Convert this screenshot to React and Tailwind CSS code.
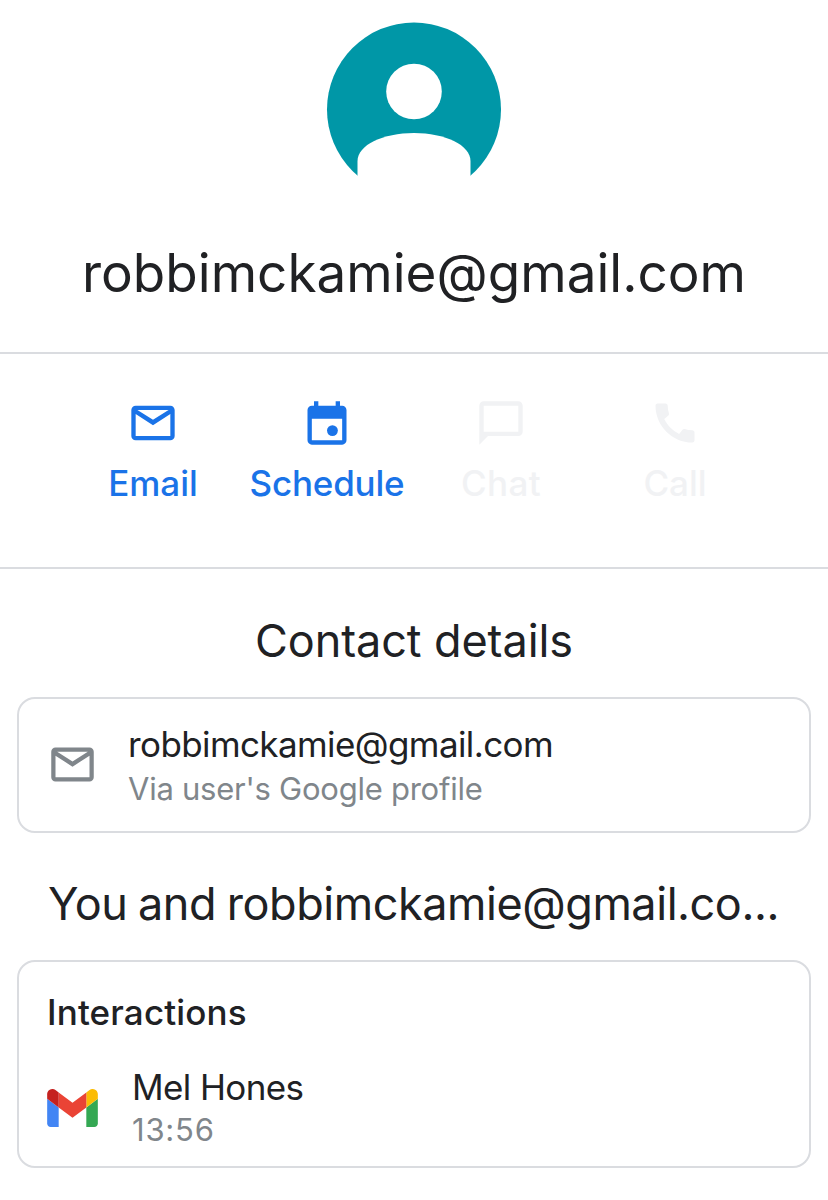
import clsx from 'clsx'

const actions = [
  { label: 'Email', icon: MailIcon, enabled: true, tracking: 'tracking-[0px]' },
  { label: 'Schedule', icon: CalendarIcon, enabled: true, tracking: 'tracking-[-0.2px]' },
  { label: 'Chat', icon: ChatIcon, enabled: false, tracking: 'tracking-[0.4px]' },
  { label: 'Call', icon: PhoneIcon, enabled: false, tracking: 'tracking-[0px]' },
]

function MailIcon({ className }) {
  return (
    <svg viewBox="0 0 24 24" fill="currentColor" className={className}>
      <path d="M22 6c0-1.100-.9-2-2-2H4c-1.100 0-2 .9-2 2v12c0 1.100.9 2 2 2h16c1.100 0 2-.9 2-2V6zM19.200 6L12 10.550 4.800 6h14.400zM20 18H4V7.900l8 5.100 8-5.100V18z" />
    </svg>
  )
}

function CalendarIcon({ className }) {
  return (
    <svg viewBox="0 0 24 24" fill="currentColor" className={className}>
      <path fillRule="evenodd" d="M19 4h-1V2h-2v2H8V2H6v2H5c-1.110 0-2 .9-2 2v14c0 1.100.89 2 2 2h14c1.100 0 2-.9 2-2V6c0-1.100-.9-2-2-2zm0 16H5V10h14v10z" />
      <circle cx="14.500" cy="15.500" r="2.500" />
    </svg>
  )
}

function ChatIcon({ className }) {
  return (
    <svg viewBox="0 0 24 24" fill="currentColor" className={className}>
      <path d="M20 2H4c-1.100 0-2 .9-2 2v18l4-4h14c1.100 0 2-.9 2-2V4c0-1.100-.9-2-2-2zm0 14H4V4h16v12z" />
    </svg>
  )
}

function PhoneIcon({ className }) {
  return (
    <svg viewBox="0 0 24 24" fill="currentColor" className={className}>
      <path d="M20.010 15.380c-1.230 0-2.420-.2-3.530-.56-.35-.12-.74-.03-1.010.24l-1.570 1.970c-2.830-1.350-5.480-3.900-6.890-6.830l1.950-1.660c.27-.28.35-.67.24-1.020-.37-1.110-.56-2.300-.56-3.530 0-.54-.45-.99-.99-.99H4.190C3.650 3 3 3.240 3 3.990 3 13.280 10.730 21 20.010 21c.71 0 .99-.63.99-1.180v-3.450c0-.54-.45-.99-.99-.99z" />
    </svg>
  )
}

function GmailLogo({ className }) {
  return (
    <svg viewBox="52 42 88 66" className={className}>
      <path fill="#4285f4" d="M58 108h14V74L52 59v43c0 3.320 2.690 6 6 6" />
      <path fill="#34a853" d="M120 108h14c3.320 0 6-2.690 6-6V59l-20 15" />
      <path fill="#fbbc04" d="M120 48v26l20-15v-8c0-7.420-8.470-11.650-14.400-7.200" />
      <path fill="#ea4335" d="M72 74V48l24 18 24-18v26L96 92" />
      <path fill="#c5221f" d="M52 51v8l20 15V48l-5.600-4.200c-5.940-4.450-14.400-.22-14.400 7.200" />
    </svg>
  )
}

function Avatar() {
  return (
    <svg viewBox="0 0 174 174" className="size-[174px] overflow-visible">
      <circle cx="87" cy="86.500" r="87" fill="#0097a7" />
      <circle cx="87" cy="68.500" r="27.800" fill="#fff" />
      <path fill="#fff" d="M30.500 176V138C30.500 122 56 110 87 110S143.500 122 143.500 138V176z" />
    </svg>
  )
}

function Action({ label, icon: Icon, enabled, tracking }) {
  return (
    <button
      disabled={!enabled}
      className={clsx('flex w-[174px] flex-col items-center', enabled ? 'text-[#1a73e8]' : 'text-[#f1f2f4]')}
    >
      <Icon className="size-[52px]" />
      <span className={clsx('mt-[13px] text-[35px] leading-[42px] font-medium', tracking)}>{label}</span>
    </button>
  )
}

function Card({ className, children }) {
  return (
    <div className={clsx('mx-[17px] rounded-[18px] border-2 border-[#dadce0]', className)}>{children}</div>
  )
}

export default function App() {
  return (
    <div className="h-[1200px] w-[828px] overflow-hidden bg-white font-['Inter',sans-serif] text-[#202124]">
      <header className="flex h-[354px] flex-col items-center border-b-2 border-[#dadce0] pt-[23px]">
        <Avatar />
        <h1 className="mt-[44px] text-[53px] leading-[64px] tracking-[0.02px] whitespace-nowrap">
          robbimckamie@gmail.com
        </h1>
      </header>

      <nav className="flex h-[215px] justify-center border-b-2 border-[#dadce0] pt-[43px]">
        <div className="flex h-[110px]">
          {actions.map(a => <Action key={a.label} {...a} />)}
        </div>
      </nav>

      <h2 className="mt-[44px] text-center text-[45px] leading-[56px] tracking-[-0.1px]">Contact details</h2>

      <Card className="mt-[28px] flex h-[136px] items-center pl-[28px]">
        <MailIcon className="mb-[2px] size-[51px] text-[#80868b]" />
        <div className="ml-[30px]">
          <p className="text-[35px] leading-[46px] tracking-[-0.6px]">robbimckamie@gmail.com</p>
          <p className="mt-px text-[31px] leading-[42px] tracking-[-0.25px] text-[#80868b]">Via user's Google profile</p>
        </div>
      </Card>

      <h2 className="mt-[43px] pl-[48px] text-[45px] leading-[56px] tracking-[-0.45px] whitespace-nowrap [word-spacing:-1.500px]">
        You and robbimckamie@gmail.co...
      </h2>

      <Card className="mt-[28px] h-[208px] px-[28px] pt-[29px]">
        <h3 className="text-[35px] leading-[42px] font-medium tracking-[0.15px]">Interactions</h3>
        <div className="mt-[32px] flex items-center">
          <GmailLogo className="h-[38px] w-[51px]" />
          <div className="ml-[34px]">
            <p className="text-[35px] leading-[44px] tracking-[-0.6px]">Mel Hones</p>
            <p className="text-[31px] leading-[42px] tracking-[0.8px] text-[#80868b]">13:56</p>
          </div>
        </div>
      </Card>
    </div>
  )
}
